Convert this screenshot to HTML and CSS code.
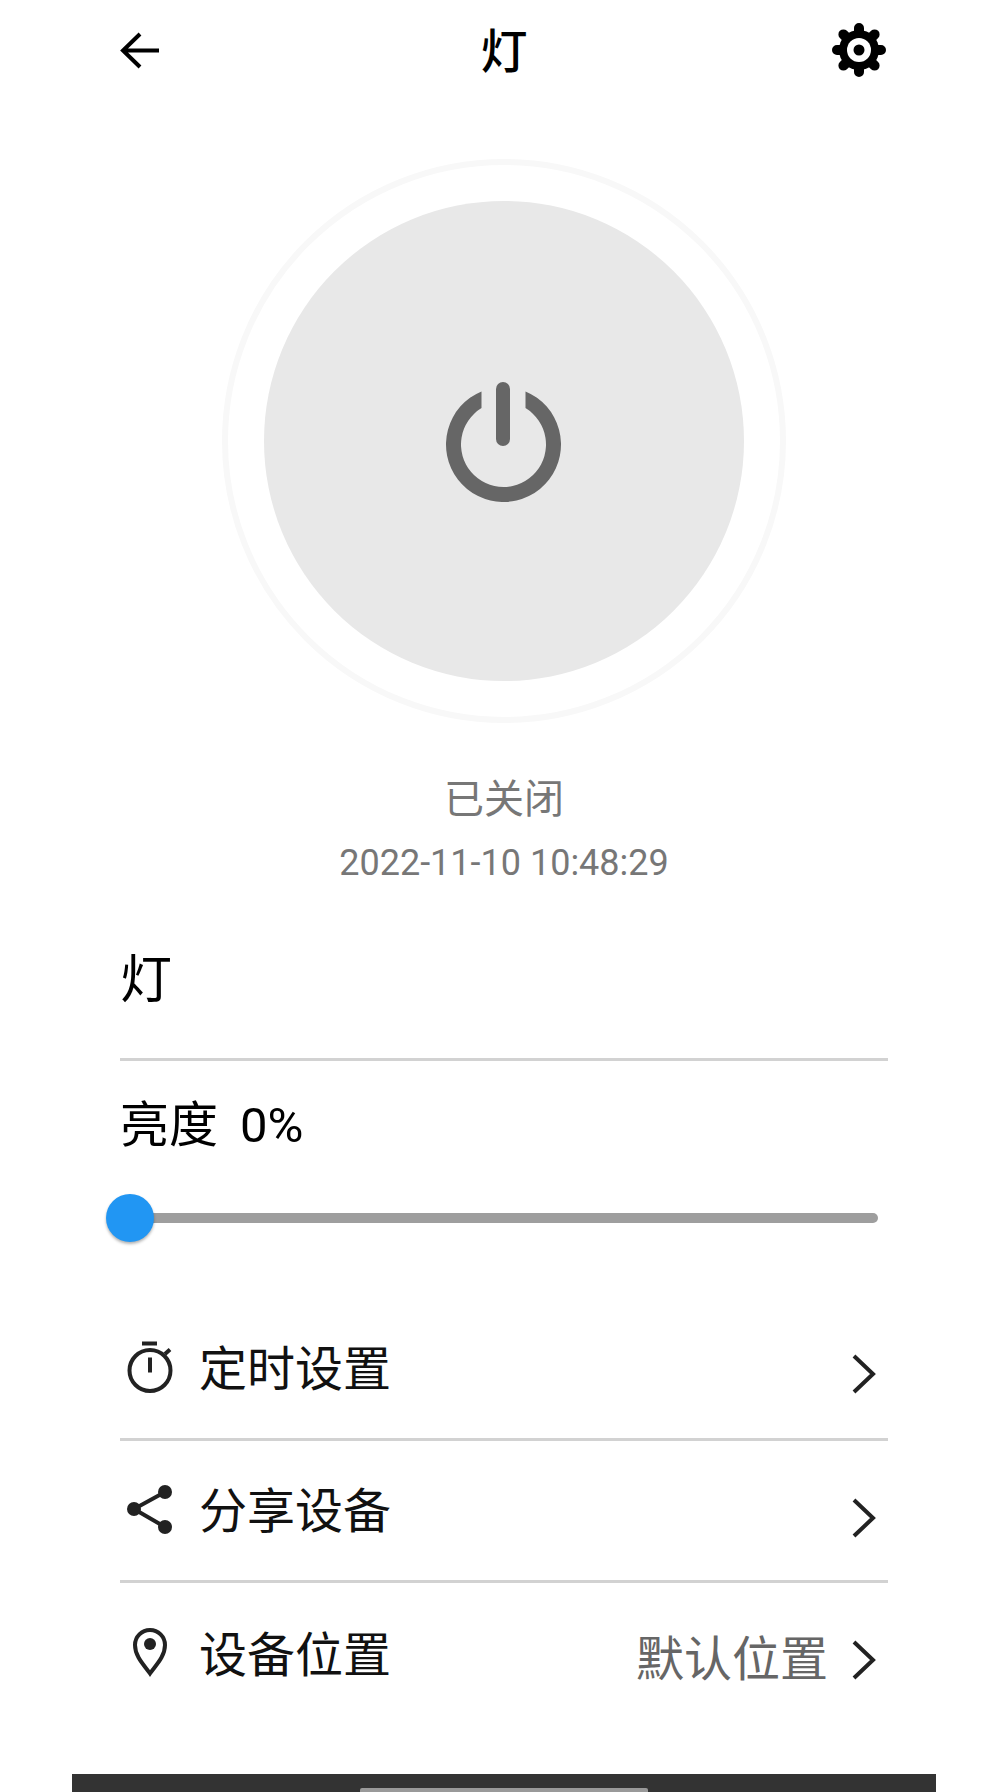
FILE: index.html
```html
<!DOCTYPE html>
<html lang="zh-CN">
<head>
    <meta charset="UTF-8">
    <meta name="viewport" content="width=device-width, initial-scale=1.0">
    <title>灯</title>
    <link rel="stylesheet" href="styles.css">
</head>
<body>
    <main class="page">
        <header class="topbar">
            <svg class="back-icon" viewBox="0 0 39 37" aria-hidden="true">
                <path d="M20 2 L3 18.5 L20 35 M3 18.5 H39"/>
            </svg>
            <h1 class="title">灯</h1>
            <svg class="gear-icon" viewBox="0 0 54 54" aria-hidden="true">
                <path class="gear-teeth" d="M27 5 V49 M5 27 H49 M11.4 11.4 L42.6 42.6 M42.6 11.4 L11.4 42.6"/>
                <circle cx="27" cy="27" r="20" fill="#000"/>
                <circle cx="27" cy="27" r="12" fill="#fff"/>
                <circle cx="27" cy="27" r="5.5" fill="#000"/>
            </svg>
        </header>

        <!-- Power button -->
        <section class="power">
            <div class="power-ring">
                <div class="power-disc">
                    <svg class="power-icon" viewBox="0 0 115 120" aria-hidden="true">
                        <path d="M35.5 9.4 A57.5 57.5 0 1 0 79.5 9.4 V26.1 A42.5 42.5 0 1 1 35.5 26.1 Z"/>
                        <rect x="50" y="0" width="14" height="64" rx="7"/>
                    </svg>
                </div>
            </div>
            <div class="status">已关闭</div>
            <div class="status-time">2022-11-10 10:48:29</div>
        </section>

        <div class="device-name">灯</div>

        <section class="brightness">
            <div class="brightness-label">亮度<span class="brightness-value">0%</span></div>
            <div class="slider">
                <div class="slider-track"></div>
                <div class="slider-thumb"></div>
            </div>
        </section>

        <!-- Settings list -->
        <section class="settings">
            <div class="row">
                <svg class="row-icon" viewBox="0 0 46 56" aria-hidden="true">
                    <circle class="line" cx="23" cy="29.5" r="20.5"/>
                    <rect x="15" y="0.5" width="15" height="4"/>
                    <rect x="21" y="16.5" width="4" height="15"/>
                    <path class="line" d="M38 13 L43 8.5"/>
                </svg>
                <span class="row-label">定时设置</span>
                <div class="row-end">
                    <svg class="chevron" viewBox="0 0 24 40" aria-hidden="true"><path d="M2 2 L21 20 L2 38"/></svg>
                </div>
            </div>
            <div class="row">
                <svg class="row-icon" viewBox="0 0 46 56" aria-hidden="true">
                    <path class="line" d="M38 9 L7 26 L38 44"/>
                    <circle cx="7" cy="26" r="7"/>
                    <circle cx="38" cy="9" r="7"/>
                    <circle cx="38" cy="44" r="7"/>
                </svg>
                <span class="row-label">分享设备</span>
                <div class="row-end row-end-low">
                    <svg class="chevron" viewBox="0 0 24 40" aria-hidden="true"><path d="M2 2 L21 20 L2 38"/></svg>
                </div>
            </div>
            <div class="row">
                <svg class="row-icon" viewBox="0 0 46 56" aria-hidden="true">
                    <path class="line" d="M23 46.5 C18 39 8 30 8 18 A15 15 0 0 1 38 18 C38 30 28 39 23 46.5 Z"/>
                    <circle cx="23" cy="17" r="6"/>
                </svg>
                <span class="row-label">设备位置</span>
                <div class="row-end">
                    <span class="row-value">默认位置</span>
                    <svg class="chevron" viewBox="0 0 24 40" aria-hidden="true"><path d="M2 2 L21 20 L2 38"/></svg>
                </div>
            </div>
        </section>
    </main>

    <footer class="navbar">
        <div class="navbar-handle"></div>
    </footer>
</body>
</html>
```

FILE: styles.css
```css
html, body {
    margin: 0;
    padding: 0;
}

body {
    width: 1008px;
    height: 1792px;
    display: flex;
    flex-direction: column;
    overflow: hidden;
    background: #fff;
    color: #000;
    font-family: Roboto, "Noto Sans CJK SC", sans-serif;
}

.page {
    flex: 1;
    padding: 0 120px;
}

.topbar {
    height: 100px;
    display: grid;
    grid-template-columns: 1fr auto 1fr;
    align-items: center;
}

.back-icon {
    width: 39px;
    height: 37px;
    fill: none;
    stroke: #000;
    stroke-width: 4;
}

.title {
    margin: 4px 0 0;
    font-size: 47px;
    font-weight: 500;
    line-height: 60px;
}

.gear-icon {
    width: 54px;
    height: 54px;
    margin-right: 2px;
    justify-self: end;
}

.gear-teeth {
    stroke: #000;
    stroke-width: 10;
    stroke-linecap: round;
}

.power {
    display: flex;
    flex-direction: column;
    align-items: center;
}

.power-ring {
    width: 564px;
    height: 564px;
    margin-top: 59px;
    box-sizing: border-box;
    border: 6px solid #f8f8f8;
    border-radius: 50%;
    display: flex;
    justify-content: center;
    align-items: center;
}

.power-disc {
    width: 480px;
    height: 480px;
    border-radius: 50%;
    background: #e8e8e8;
    display: flex;
    justify-content: center;
    align-items: center;
}

.power-icon {
    width: 115px;
    height: 120px;
    margin: 1px 1px 0 0;
    fill: #666;
}

.status {
    margin-top: 47px;
    font-size: 40px;
    line-height: 60px;
    color: #777;
}

.status-time {
    margin-top: 8px;
    font-size: 36px;
    line-height: 50px;
    color: #777;
}

.device-name {
    margin-top: 63px;
    padding-bottom: 47px;
    font-size: 52px;
    line-height: 60px;
    border-bottom: 3px solid #d2d2d2;
}

.brightness-label {
    margin-top: 35px;
    font-size: 49px;
    line-height: 60px;
}

.brightness-value {
    margin-left: 22px;
}

.slider {
    position: relative;
    height: 48px;
    margin-top: 38px;
    display: flex;
    align-items: center;
}

.slider-track {
    width: 758px;
    height: 10px;
    border-radius: 5px;
    background: #9e9e9e;
}

.slider-thumb {
    position: absolute;
    left: -14px;
    top: 0;
    width: 48px;
    height: 48px;
    border-radius: 50%;
    background: #2196f3;
    box-shadow: 0 2px 3px rgba(0, 0, 0, 0.3);
}

.settings {
    margin-top: 57px;
}

.row {
    height: 139px;
    padding-left: 7px;
    display: flex;
    align-items: center;
    gap: 26px;
    border-bottom: 3px solid #d2d2d2;
}

.row:last-child {
    height: 143px;
    border-bottom: none;
}

.row-icon {
    width: 46px;
    height: 56px;
    fill: #222;
}

.row-icon .line {
    fill: none;
    stroke: #222;
    stroke-width: 4;
}

.row-label {
    padding-top: 2px;
    font-size: 48px;
    line-height: 60px;
    color: #111;
}

.row-end {
    margin-left: auto;
    padding-top: 10px;
    padding-right: 12px;
    display: flex;
    align-items: center;
    gap: 24px;
}

.row-end-low {
    padding-top: 14px;
}

.row-value {
    font-size: 48px;
    line-height: 60px;
    color: #666;
}

.chevron {
    width: 24px;
    height: 40px;
    fill: none;
    stroke: #222;
    stroke-width: 4;
}

.navbar {
    width: 864px;
    height: 18px;
    margin: 0 auto;
    background: #333;
    display: flex;
    justify-content: center;
    align-items: flex-end;
}

.navbar-handle {
    width: 288px;
    height: 4px;
    border-radius: 2px 2px 0 0;
    background: #999;
}
```
